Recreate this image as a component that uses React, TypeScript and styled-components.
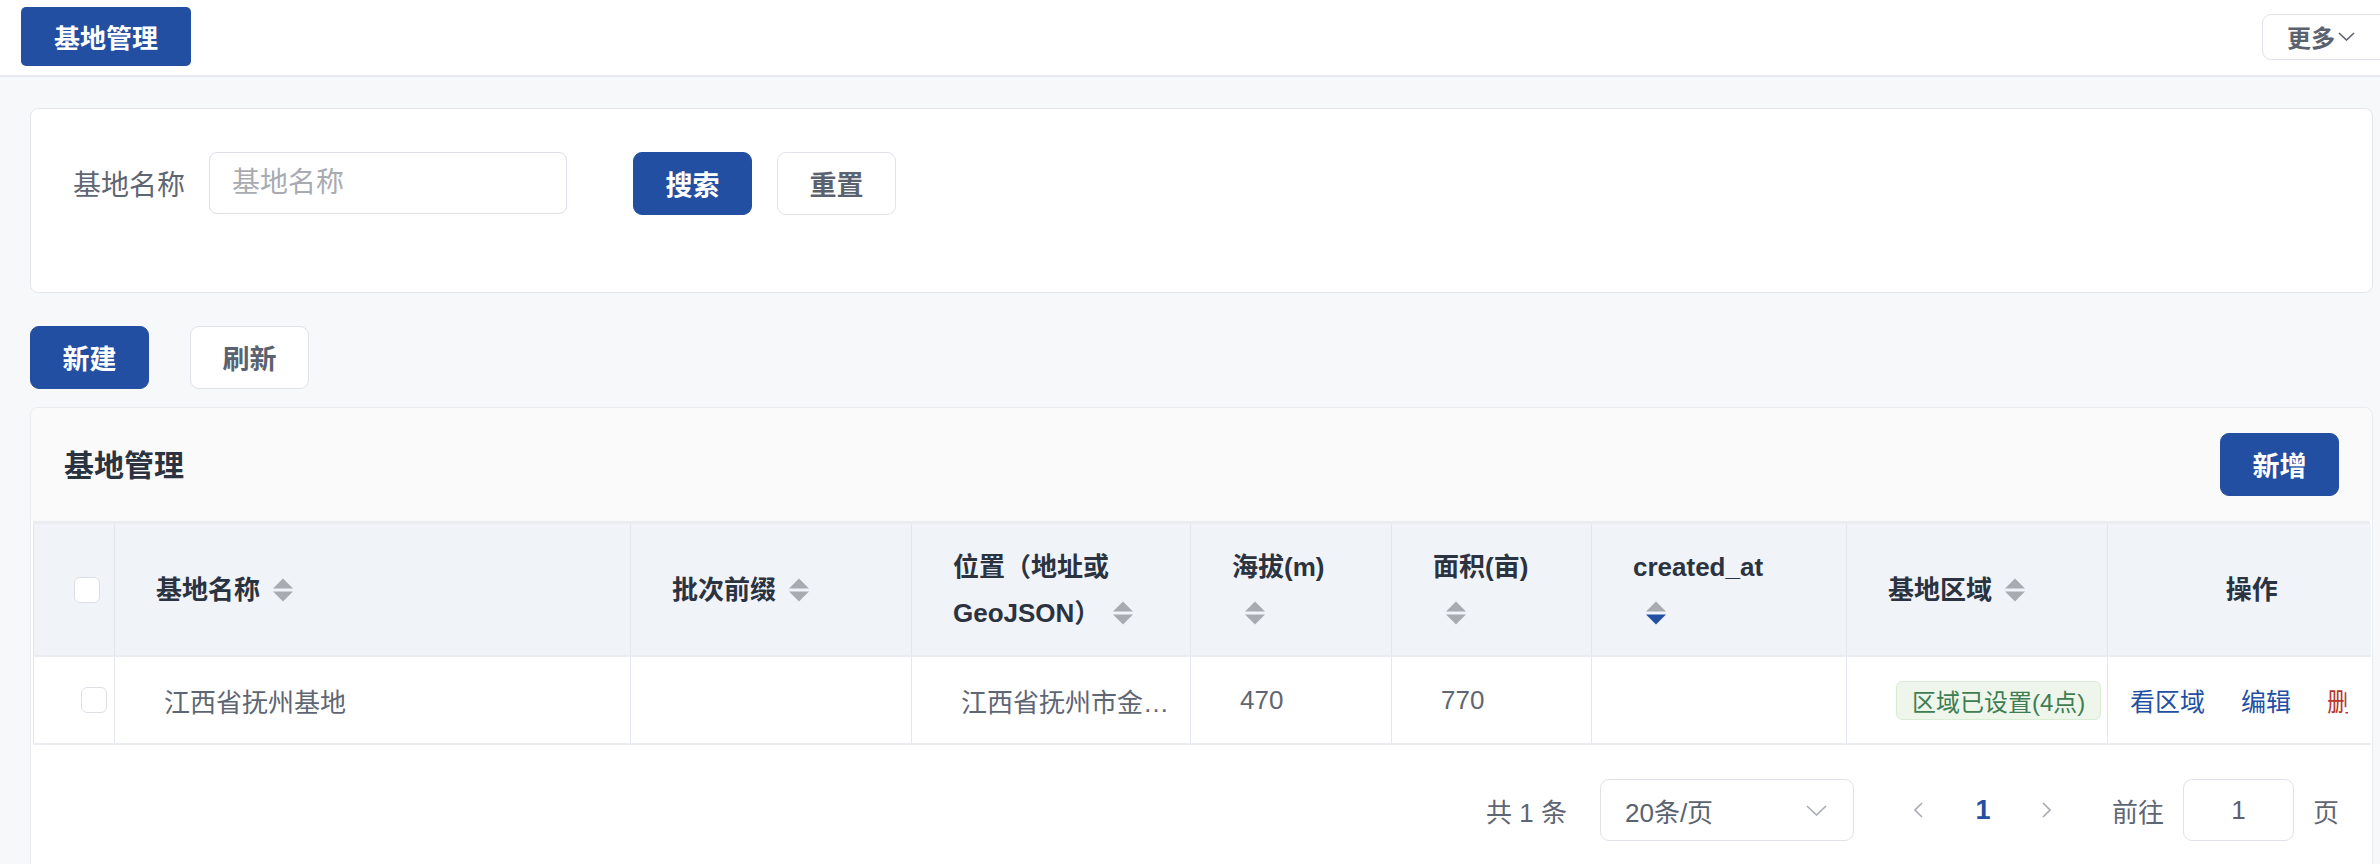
import React from 'react'
import styled, { createGlobalStyle } from 'styled-components'

const primary = '#234fa2'
const textMain = '#2b3240'
const textBody = '#5f6673'
const muted = '#a8abb2'

const GlobalStyle = createGlobalStyle`
    html, body {
        margin: 0;
        padding: 0;
        overflow: hidden;
        background: #f6f8fa;
        font-family: "Liberation Sans", "Noto Sans CJK SC", sans-serif;
    }
    * { box-sizing: border-box; }
`

type Column = {
    key: string
    width: number
    title?: string
    lines?: string[]
    sortable?: boolean
    iconBelow?: boolean
    active?: 'asc' | 'desc'
    center?: boolean
}

const columns: Column[] = [
    { key: 'sel', width: 81 },
    { key: 'name', width: 516, title: '基地名称', sortable: true },
    { key: 'prefix', width: 281, title: '批次前缀', sortable: true },
    { key: 'loc', width: 279, lines: ['位置（地址或', 'GeoJSON）'], sortable: true },
    { key: 'alt', width: 201, title: '海拔(m)', sortable: true, iconBelow: true },
    { key: 'area', width: 200, title: '面积(亩)', sortable: true, iconBelow: true },
    { key: 'created', width: 255, title: 'created_at', sortable: true, iconBelow: true, active: 'desc' },
    { key: 'region', width: 261, title: '基地区域', sortable: true },
    { key: 'ops', width: 263, title: '操作', center: true },
]

function SortIcon({ active }: { active?: 'asc' | 'desc' }) {
    return (
        <SortSvg width="20" height="24" viewBox="0 0 20 24">
            <polygon points="0,10.5 10,0.5 20,10.5" fill={active === 'asc' ? primary : muted} />
            <polygon points="0,13.5 20,13.5 10,23.5" fill={active === 'desc' ? primary : muted} />
        </SortSvg>
    )
}

function Chevron({ w = 16, h = 8, color = muted, dir = 'down' }: { w?: number, h?: number, color?: string, dir?: 'down' | 'left' | 'right' }) {
    const pts = dir === 'down'
        ? `1,1 ${w / 2},${h - 1} ${w - 1},1`
        : dir === 'left'
            ? `${w - 1},1 1,${h / 2} ${w - 1},${h - 1}`
            : `1,1 ${w - 1},${h / 2} 1,${h - 1}`
    return (
        <svg width={w} height={h} viewBox={`0 0 ${w} ${h}`}>
            <polyline points={pts} fill="none" stroke={color} strokeWidth="1.6" />
        </svg>
    )
}

function HeadContent({ col }: { col: Column }) {
    if (col.key === 'sel') return <CheckBox />
    const icon = col.sortable ? <SortIcon active={col.active} /> : null
    if (col.lines) {
        return (
            <HeadLabel>
                {col.lines[0]}<br />{col.lines[1]}{icon}
            </HeadLabel>
        )
    }
    if (col.iconBelow) {
        return (
            <HeadLabel>
                {col.title}<br />{icon}
            </HeadLabel>
        )
    }
    return <HeadLabel>{col.title}{icon}</HeadLabel>
}

export default function App() {
    return (
        <Page>
            <GlobalStyle />
            <TopBar>
                <TabButton>基地管理</TabButton>
                <MoreButton>
                    更多
                    <Chevron w={17} h={9} color="#5a6270" />
                </MoreButton>
            </TopBar>

            <Main>
                <SearchCard>
                    <FormItem>
                        <FormLabel>基地名称</FormLabel>
                        <TextInput placeholder="基地名称" />
                    </FormItem>
                    <Button $primary>搜索</Button>
                    <Button>重置</Button>
                </SearchCard>

                <Toolbar>
                    <Button $primary>新建</Button>
                    <Button>刷新</Button>
                </Toolbar>

                <TableCard>
                    <CardHeader>
                        <CardTitle>基地管理</CardTitle>
                        <Button $primary>新增</Button>
                    </CardHeader>

                    <TableWrap>
                        <Table>
                            <colgroup>
                                {columns.map(c => <col key={c.key} style={{ width: c.width }} />)}
                            </colgroup>
                            <thead>
                                <tr>
                                    {columns.map(c => (
                                        <Th key={c.key} $center={c.center} $sel={c.key === 'sel'}>
                                            <HeadContent col={c} />
                                        </Th>
                                    ))}
                                </tr>
                            </thead>
                            <tbody>
                                <tr>
                                    <Td $sel><CheckBox /></Td>
                                    <Td>江西省抚州基地</Td>
                                    <Td></Td>
                                    <Td><Ellipsis>江西省抚州市金溪县琅琚镇</Ellipsis></Td>
                                    <Td>470</Td>
                                    <Td>770</Td>
                                    <Td></Td>
                                    <Td><Tag>区域已设置(4点)</Tag></Td>
                                    <ActionCell>
                                        <Actions>
                                            <LinkButton>看区域</LinkButton>
                                            <LinkButton>编辑</LinkButton>
                                            <LinkButton $danger>删除</LinkButton>
                                        </Actions>
                                    </ActionCell>
                                </tr>
                            </tbody>
                        </Table>
                    </TableWrap>

                    <Pagination>
                        <Total>共 1 条</Total>
                        <SizeSelect>
                            <span>20条/页</span>
                            <Chevron w={21} h={11} />
                        </SizeSelect>
                        <PagerBtn><Chevron w={9} h={16} dir="left" /></PagerBtn>
                        <PagerBtn $active>1</PagerBtn>
                        <PagerBtn><Chevron w={9} h={16} dir="right" /></PagerBtn>
                        <JumpText>前往</JumpText>
                        <JumpInput>1</JumpInput>
                        <JumpText>页</JumpText>
                    </Pagination>
                </TableCard>
            </Main>
        </Page>
    )
}

const Page = styled.div`
    width: 2380px;
    height: 864px;
    overflow: hidden;
    background: #f6f8fa;
`

const TopBar = styled.div`
    height: 77px;
    margin-right: -14px;
    padding: 0 0 2px 21px;
    display: flex;
    align-items: center;
    justify-content: space-between;
    background: #fff;
    border-bottom: 2px solid #e6e9ee;
`

const TabButton = styled.div`
    width: 170px;
    height: 59px;
    display: flex;
    align-items: center;
    justify-content: center;
    background: ${primary};
    color: #fff;
    border-radius: 5px;
    font-size: 26px;
    font-weight: 700;
`

const MoreButton = styled.div`
    width: 132px;
    height: 46px;
    padding-left: 24px;
    display: flex;
    align-items: center;
    gap: 3px;
    border: 1.5px solid #dfe2e8;
    border-radius: 9px;
    color: #5a6270;
    font-size: 24px;
    font-weight: 600;
`

const Main = styled.div`
    padding: 31px 7px 0 30px;
`

const SearchCard = styled.div`
    height: 185px;
    padding: 43px 0 0 42px;
    display: flex;
    align-items: flex-start;
    background: #fff;
    border: 1.5px solid #e3e7ec;
    border-radius: 8px;

    & > button + button {
        margin-left: 25px;
    }
`

const FormItem = styled.div`
    display: flex;
    align-items: center;
    height: 62px;
    margin-right: 66px;
`

const FormLabel = styled.label`
    font-size: 28px;
    color: ${textBody};
    margin-right: 24px;
`

const TextInput = styled.input`
    width: 358px;
    height: 62px;
    padding: 0 22px;
    border: 1.5px solid #dcdfe6;
    border-radius: 8px;
    font-family: inherit;
    font-size: 28px;
    color: ${textBody};
    outline: none;

    &::placeholder {
        color: ${muted};
    }
`

const Button = styled.button<{ $primary?: boolean }>`
    width: 119px;
    height: 63px;
    display: inline-flex;
    align-items: center;
    justify-content: center;
    padding: 0;
    border-radius: 9px;
    font-family: inherit;
    font-size: 27px;
    font-weight: ${({ $primary }) => ($primary ? 700 : 600)};
    background: ${({ $primary }) => ($primary ? primary : '#fff')};
    color: ${({ $primary }) => ($primary ? '#fff' : '#5a6270')};
    border: 1.5px solid ${({ $primary }) => ($primary ? primary : '#dfe2e8')};
    cursor: pointer;
`

const Toolbar = styled.div`
    display: flex;
    gap: 41px;
    margin-top: 33px;
`

const TableCard = styled.div`
    margin-top: 18px;
    height: 600px;
    background: #fff;
    border: 1.5px solid #e8ebf0;
    border-radius: 8px;
    overflow: hidden;
`

const CardHeader = styled.div`
    height: 113px;
    padding: 0 33px 0 33px;
    display: flex;
    align-items: center;
    justify-content: space-between;
    background: #fafafa;
`

const CardTitle = styled.div`
    font-size: 30px;
    font-weight: 700;
    color: ${textMain};
    margin-top: -3px;
`

const TableWrap = styled.div`
    margin: 0 2px;
    border-top: 3px solid #e9ecf1;
`

const Table = styled.table`
    table-layout: fixed;
    border-collapse: collapse;
    width: 2337px;
`

const Th = styled.th<{ $center?: boolean, $sel?: boolean }>`
    height: 132px;
    padding: 0 16px 0 ${({ $sel }) => ($sel ? 40 : 41)}px;
    background: #f0f3f8;
    border-left: 1.5px solid #e3e6ec;
    border-bottom: 2px solid #e9ecf1;
    text-align: ${({ $center }) => ($center ? 'center' : 'left')};
    vertical-align: middle;
    font-size: 26px;
    font-weight: 700;
    color: ${textMain};
    line-height: 46px;
`

const HeadLabel = styled.div`
    white-space: nowrap;
`

const SortSvg = styled.svg`
    display: inline-block;
    vertical-align: middle;
    margin-left: 13px;
    margin-top: -4px;
`

const CheckBox = styled.span`
    display: block;
    width: 26px;
    height: 26px;
    background: #fff;
    border: 1.5px solid #dcdfe6;
    border-radius: 6px;
`

const Td = styled.td<{ $sel?: boolean }>`
    height: 88px;
    padding: 0 12px 0 ${({ $sel }) => ($sel ? 47 : 49)}px;
    border-left: 1.5px solid #e3e6ec;
    border-bottom: 2px solid #e9ecf1;
    vertical-align: middle;
    font-size: 26px;
    color: ${textBody};
    white-space: nowrap;
    overflow: hidden;
`

const Ellipsis = styled.div`
    width: 212px;
    overflow: hidden;
    text-overflow: ellipsis;
    white-space: nowrap;
`

const Tag = styled.span`
    display: inline-flex;
    align-items: center;
    height: 39px;
    padding: 0 15px;
    background: #eef6ec;
    border: 1.5px solid #d9ecd4;
    border-radius: 6px;
    color: #3f7d52;
    font-size: 24px;
`

const ActionCell = styled.td`
    height: 88px;
    padding: 0 23px 0 22px;
    border-left: 1.5px solid #e3e6ec;
    border-bottom: 2px solid #e9ecf1;
    vertical-align: middle;
`

const Actions = styled.div`
    display: flex;
    gap: 36px;
    overflow: hidden;
    white-space: nowrap;
`

const LinkButton = styled.span<{ $danger?: boolean }>`
    font-size: 25px;
    color: ${({ $danger }) => ($danger ? '#b8382d' : primary)};
    flex-shrink: 0;
`

const Pagination = styled.div`
    display: flex;
    align-items: center;
    justify-content: flex-end;
    padding: 34px 33px 0 0;
`

const Total = styled.span`
    font-size: 26px;
    color: ${textBody};
    margin-right: 33px;
`

const SizeSelect = styled.div`
    width: 254px;
    height: 62px;
    padding: 0 26px 0 24px;
    display: flex;
    align-items: center;
    justify-content: space-between;
    border: 1.5px solid #dfe2e8;
    border-radius: 9px;
    font-size: 26px;
    color: #5a6270;
    margin-right: 33px;
`

const PagerBtn = styled.div<{ $active?: boolean }>`
    width: 64px;
    height: 62px;
    display: flex;
    align-items: center;
    justify-content: center;
    font-size: 27px;
    font-weight: 700;
    color: ${({ $active }) => ($active ? primary : muted)};
`

const JumpText = styled.span`
    font-size: 26px;
    color: ${textBody};
    margin-left: 33px;

    & + div {
        margin-left: 19px;
    }
`

const JumpInput = styled.div`
    width: 111px;
    height: 62px;
    display: flex;
    align-items: center;
    justify-content: center;
    border: 1.5px solid #dfe2e8;
    border-radius: 9px;
    font-size: 26px;
    color: #5a6270;

    & + span {
        margin-left: 19px;
    }
`
